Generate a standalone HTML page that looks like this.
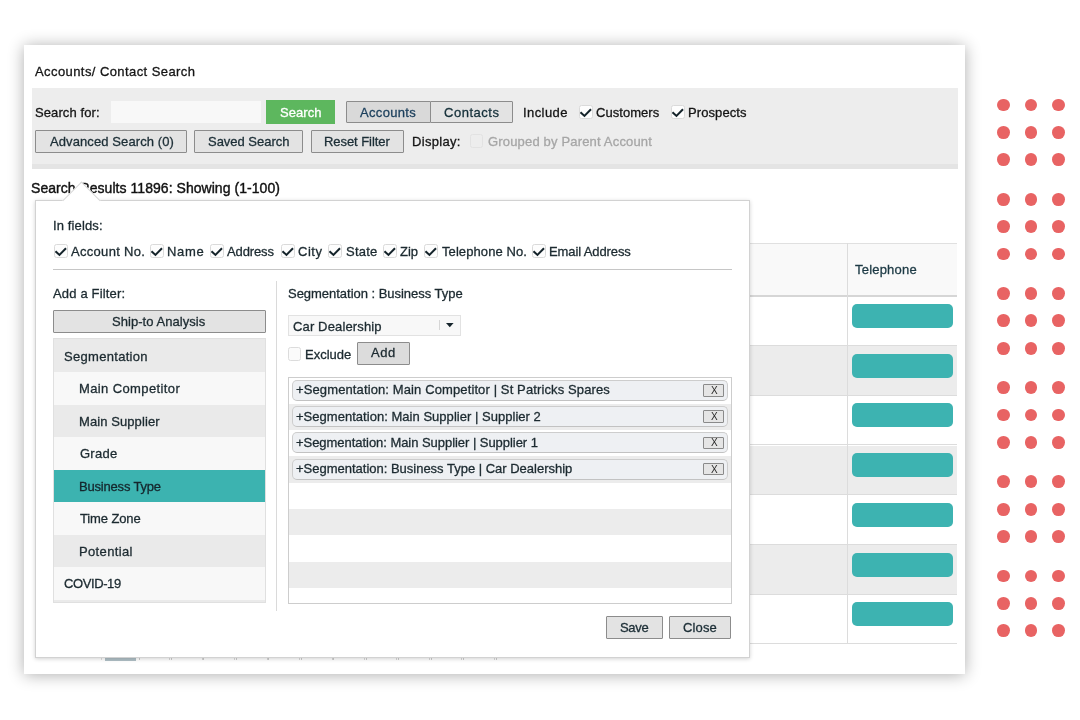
<!DOCTYPE html>
<html><head><meta charset="utf-8">
<style>
*{box-sizing:border-box;margin:0;padding:0}
html,body{width:1080px;height:720px;overflow:hidden;background:#fff;font-family:"Liberation Sans",sans-serif;font-size:13px}
.a{position:absolute}
.t{position:absolute;white-space:pre;will-change:transform}
.dot{position:absolute;width:12.8px;height:12.8px;border-radius:50%;background:#e86363}
</style></head><body>
<div class="a" style="left:24px;top:45px;width:941px;height:629px;background:#fff;box-shadow:0 1px 15px rgba(0,0,0,0.32)"></div>
<div class="t" style="left:35.30px;top:63.90px;font-size:13px;line-height:16px;color:#151515;-webkit-text-stroke:0.3px #151515;letter-spacing:0.419px;">Accounts/ Contact Search</div>
<div class="a" style="left:32px;top:88px;width:926px;height:81px;background:#ededed"></div>
<div class="a" style="left:32px;top:163.5px;width:926px;height:5.5px;background:#e4e4e4"></div>
<div class="t" style="left:35.40px;top:105.10px;font-size:13px;line-height:16px;color:#151515;-webkit-text-stroke:0.3px #151515;letter-spacing:0.103px;">Search for:</div>
<div class="a" style="left:111px;top:101px;width:150px;height:22px;background:#f8f8f8"></div>
<div class="a" style="left:266px;top:100px;width:69px;height:24px;background:#5db75e"></div>
<div class="t" style="left:280.00px;top:105.10px;font-size:13px;line-height:16px;color:#ffffff;-webkit-text-stroke:0.3px #ffffff;letter-spacing:0.058px;">Search</div>
<div class="a" style="left:346px;top:100.5px;width:84.5px;height:22.5px;background:#d9d9d9;border:1px solid #8c8c8c;border-radius:1px"></div>
<div class="a" style="left:429.5px;top:100.5px;width:83.5px;height:22.5px;background:#e3e3e3;border:1px solid #8c8c8c;border-radius:1px"></div>
<div class="t" style="left:360.00px;top:105.10px;font-size:13px;line-height:16px;color:#1b3f5c;-webkit-text-stroke:0.3px #1b3f5c;letter-spacing:0.325px;">Accounts</div>
<div class="t" style="left:443.75px;top:105.10px;font-size:13px;line-height:16px;color:#15303a;-webkit-text-stroke:0.3px #15303a;letter-spacing:0.528px;">Contacts</div>
<div class="t" style="left:523.25px;top:105.10px;font-size:13px;line-height:16px;color:#151515;-webkit-text-stroke:0.3px #151515;letter-spacing:0.427px;">Include</div>
<div class="a" style="left:579px;top:105px;width:13.5px;height:14px;border:1px solid #dadada;border-radius:2.5px;background:#fdfdfd"><svg class="a" style="left:0;top:0" width="13" height="13" viewBox="0 0 13 13"><polyline points="0.5,6.3 4.45,9.9 11,3.3" fill="none" stroke="#14232a" stroke-width="2" stroke-linecap="butt" stroke-linejoin="miter"/></svg></div>
<div class="t" style="left:596.25px;top:105.10px;font-size:13px;line-height:16px;color:#151515;-webkit-text-stroke:0.3px #151515;letter-spacing:0.050px;">Customers</div>
<div class="a" style="left:671px;top:105px;width:13.5px;height:14px;border:1px solid #dadada;border-radius:2.5px;background:#fdfdfd"><svg class="a" style="left:0;top:0" width="13" height="13" viewBox="0 0 13 13"><polyline points="0.5,6.3 4.45,9.9 11,3.3" fill="none" stroke="#14232a" stroke-width="2" stroke-linecap="butt" stroke-linejoin="miter"/></svg></div>
<div class="t" style="left:687.75px;top:105.10px;font-size:13px;line-height:16px;color:#151515;-webkit-text-stroke:0.3px #151515;letter-spacing:0.087px;">Prospects</div>
<div class="a" style="left:35.3px;top:130px;width:151.5px;height:23px;background:#e3e3e3;border:1px solid #8c8c8c;border-radius:1px"></div>
<div class="a" style="left:194.2px;top:130px;width:108.5px;height:23px;background:#e3e3e3;border:1px solid #8c8c8c;border-radius:1px"></div>
<div class="a" style="left:311.2px;top:130px;width:92.5px;height:23px;background:#e3e3e3;border:1px solid #8c8c8c;border-radius:1px"></div>
<div class="t" style="left:49.50px;top:134.00px;font-size:13px;line-height:16px;color:#1c2e36;-webkit-text-stroke:0.3px #1c2e36;letter-spacing:0.095px;">Advanced Search (0)</div>
<div class="t" style="left:208.00px;top:134.00px;font-size:13px;line-height:16px;color:#1c2e36;-webkit-text-stroke:0.3px #1c2e36;letter-spacing:-0.017px;">Saved Search</div>
<div class="t" style="left:324.00px;top:134.00px;font-size:13px;line-height:16px;color:#1c2e36;-webkit-text-stroke:0.3px #1c2e36;letter-spacing:-0.057px;">Reset Filter</div>
<div class="t" style="left:411.50px;top:134.00px;font-size:13px;line-height:16px;color:#151515;-webkit-text-stroke:0.3px #151515;letter-spacing:0.304px;">Display:</div>
<div class="a" style="left:470px;top:134px;width:13px;height:13.5px;border:1px solid #e2e2e2;border-radius:2.5px;background:#ededed"></div>
<div class="t" style="left:488.00px;top:134.00px;font-size:13px;line-height:16px;color:#a6a6a6;-webkit-text-stroke:0.3px #a6a6a6;letter-spacing:0.174px;">Grouped by Parent Account</div>
<div class="t" style="left:31.10px;top:178.55px;font-size:14px;line-height:18px;color:#111111;-webkit-text-stroke:0.3px #111111;letter-spacing:0.046px;-webkit-text-stroke:0.4px #111">Search Results 11896: Showing (1-100)</div>
<div class="a" style="left:36px;top:243px;width:921px;height:54px;background:#f9f9f9;border-top:1px solid #e0e0e0"></div>
<div class="a" style="left:36px;top:296.3px;width:921px;height:49.7px;background:#fff;border-bottom:1px solid #dcdcdc"></div>
<div class="a" style="left:852.3px;top:303.9px;width:100.7px;height:24px;background:#3db3b1;border-radius:5px"></div>
<div class="a" style="left:36px;top:346.0px;width:921px;height:49.7px;background:#ececec;border-bottom:1px solid #dcdcdc"></div>
<div class="a" style="left:852.3px;top:353.6px;width:100.7px;height:24px;background:#3db3b1;border-radius:5px"></div>
<div class="a" style="left:36px;top:395.8px;width:921px;height:49.7px;background:#fff;border-bottom:1px solid #dcdcdc"></div>
<div class="a" style="left:852.3px;top:403.4px;width:100.7px;height:24px;background:#3db3b1;border-radius:5px"></div>
<div class="a" style="left:36px;top:445.5px;width:921px;height:49.7px;background:#ececec;border-bottom:1px solid #dcdcdc"></div>
<div class="a" style="left:852.3px;top:453.1px;width:100.7px;height:24px;background:#3db3b1;border-radius:5px"></div>
<div class="a" style="left:36px;top:495.2px;width:921px;height:49.7px;background:#fff;border-bottom:1px solid #dcdcdc"></div>
<div class="a" style="left:852.3px;top:502.8px;width:100.7px;height:24px;background:#3db3b1;border-radius:5px"></div>
<div class="a" style="left:36px;top:545.0px;width:921px;height:49.7px;background:#ececec;border-bottom:1px solid #dcdcdc"></div>
<div class="a" style="left:852.3px;top:552.6px;width:100.7px;height:24px;background:#3db3b1;border-radius:5px"></div>
<div class="a" style="left:36px;top:594.7px;width:921px;height:49.7px;background:#fff;border-bottom:1px solid #dcdcdc"></div>
<div class="a" style="left:852.3px;top:602.3px;width:100.7px;height:24px;background:#3db3b1;border-radius:5px"></div>
<div class="a" style="left:36px;top:295px;width:921px;height:2px;background:#d6d6d6"></div>
<div class="a" style="left:847.3px;top:243px;width:1px;height:401px;background:#dcdcdc"></div>
<div class="t" style="left:855.30px;top:262.20px;font-size:13px;line-height:16px;color:#1d3a45;-webkit-text-stroke:0.3px #1d3a45;letter-spacing:0.204px;">Telephone</div>
<div class="a" style="left:105px;top:650px;width:31px;height:10.5px;background:#afbfc5"></div>
<div class="a" style="left:101px;top:650px;width:1px;height:10px;background:#dedede"></div>
<div class="a" style="left:138.5px;top:650px;width:1px;height:10px;background:#cdcdcd"></div>
<div class="a" style="left:170.9px;top:650px;width:1px;height:10px;background:#cdcdcd"></div>
<div class="a" style="left:169.2px;top:650px;width:1px;height:10px;background:#d8d8d8"></div>
<div class="a" style="left:203.4px;top:650px;width:1px;height:10px;background:#cdcdcd"></div>
<div class="a" style="left:201.7px;top:650px;width:1px;height:10px;background:#d8d8d8"></div>
<div class="a" style="left:235.9px;top:650px;width:1px;height:10px;background:#cdcdcd"></div>
<div class="a" style="left:234.2px;top:650px;width:1px;height:10px;background:#d8d8d8"></div>
<div class="a" style="left:268.3px;top:650px;width:1px;height:10px;background:#cdcdcd"></div>
<div class="a" style="left:266.6px;top:650px;width:1px;height:10px;background:#d8d8d8"></div>
<div class="a" style="left:300.8px;top:650px;width:1px;height:10px;background:#cdcdcd"></div>
<div class="a" style="left:299.1px;top:650px;width:1px;height:10px;background:#d8d8d8"></div>
<div class="a" style="left:333.2px;top:650px;width:1px;height:10px;background:#cdcdcd"></div>
<div class="a" style="left:331.5px;top:650px;width:1px;height:10px;background:#d8d8d8"></div>
<div class="a" style="left:365.7px;top:650px;width:1px;height:10px;background:#cdcdcd"></div>
<div class="a" style="left:364.0px;top:650px;width:1px;height:10px;background:#d8d8d8"></div>
<div class="a" style="left:398.1px;top:650px;width:1px;height:10px;background:#cdcdcd"></div>
<div class="a" style="left:396.4px;top:650px;width:1px;height:10px;background:#d8d8d8"></div>
<div class="a" style="left:430.6px;top:650px;width:1px;height:10px;background:#cdcdcd"></div>
<div class="a" style="left:428.9px;top:650px;width:1px;height:10px;background:#d8d8d8"></div>
<div class="a" style="left:463.0px;top:650px;width:1px;height:10px;background:#cdcdcd"></div>
<div class="a" style="left:461.3px;top:650px;width:1px;height:10px;background:#d8d8d8"></div>
<div class="a" style="left:495.5px;top:650px;width:1px;height:10px;background:#cdcdcd"></div>
<div class="a" style="left:493.8px;top:650px;width:1px;height:10px;background:#d8d8d8"></div>
<div class="a" style="left:35px;top:200px;width:715px;height:457.5px;background:#fff;border:1px solid #d2d2d2;box-shadow:0 1px 4px rgba(0,0,0,0.18)"></div>
<div class="a" style="left:68.3px;top:186.6px;width:26.9px;height:26.9px;background:#fff;border-left:1px solid #d8d8d8;border-top:1px solid #d8d8d8;transform:rotate(45deg)"></div>
<div class="t" style="left:52.90px;top:217.90px;font-size:13px;line-height:16px;color:#1c2a30;-webkit-text-stroke:0.3px #1c2a30;letter-spacing:0.133px;">In fields:</div>
<div class="a" style="left:54px;top:244px;width:13.5px;height:14.2px;border:1px solid #dadada;border-radius:2.5px;background:#fdfdfd"><svg class="a" style="left:0;top:0" width="13" height="13" viewBox="0 0 13 13"><polyline points="0.5,6.3 4.45,9.9 11,3.3" fill="none" stroke="#14232a" stroke-width="2" stroke-linecap="butt" stroke-linejoin="miter"/></svg></div>
<div class="t" style="left:71.25px;top:244.20px;font-size:13px;line-height:16px;color:#1c2a30;-webkit-text-stroke:0.3px #1c2a30;letter-spacing:0.305px;">Account No.</div>
<div class="a" style="left:150px;top:244px;width:13.5px;height:14.2px;border:1px solid #dadada;border-radius:2.5px;background:#fdfdfd"><svg class="a" style="left:0;top:0" width="13" height="13" viewBox="0 0 13 13"><polyline points="0.5,6.3 4.45,9.9 11,3.3" fill="none" stroke="#14232a" stroke-width="2" stroke-linecap="butt" stroke-linejoin="miter"/></svg></div>
<div class="t" style="left:167.25px;top:244.20px;font-size:13px;line-height:16px;color:#1c2a30;-webkit-text-stroke:0.3px #1c2a30;letter-spacing:0.684px;">Name</div>
<div class="a" style="left:210px;top:244px;width:13.5px;height:14.2px;border:1px solid #dadada;border-radius:2.5px;background:#fdfdfd"><svg class="a" style="left:0;top:0" width="13" height="13" viewBox="0 0 13 13"><polyline points="0.5,6.3 4.45,9.9 11,3.3" fill="none" stroke="#14232a" stroke-width="2" stroke-linecap="butt" stroke-linejoin="miter"/></svg></div>
<div class="t" style="left:227.00px;top:244.20px;font-size:13px;line-height:16px;color:#1c2a30;-webkit-text-stroke:0.3px #1c2a30;letter-spacing:-0.115px;">Address</div>
<div class="a" style="left:281px;top:244px;width:13.5px;height:14.2px;border:1px solid #dadada;border-radius:2.5px;background:#fdfdfd"><svg class="a" style="left:0;top:0" width="13" height="13" viewBox="0 0 13 13"><polyline points="0.5,6.3 4.45,9.9 11,3.3" fill="none" stroke="#14232a" stroke-width="2" stroke-linecap="butt" stroke-linejoin="miter"/></svg></div>
<div class="t" style="left:298.40px;top:244.20px;font-size:13px;line-height:16px;color:#1c2a30;-webkit-text-stroke:0.3px #1c2a30;letter-spacing:0.537px;">City</div>
<div class="a" style="left:328px;top:244px;width:13.5px;height:14.2px;border:1px solid #dadada;border-radius:2.5px;background:#fdfdfd"><svg class="a" style="left:0;top:0" width="13" height="13" viewBox="0 0 13 13"><polyline points="0.5,6.3 4.45,9.9 11,3.3" fill="none" stroke="#14232a" stroke-width="2" stroke-linecap="butt" stroke-linejoin="miter"/></svg></div>
<div class="t" style="left:345.60px;top:244.20px;font-size:13px;line-height:16px;color:#1c2a30;-webkit-text-stroke:0.3px #1c2a30;letter-spacing:0.244px;">State</div>
<div class="a" style="left:383px;top:244px;width:13.5px;height:14.2px;border:1px solid #dadada;border-radius:2.5px;background:#fdfdfd"><svg class="a" style="left:0;top:0" width="13" height="13" viewBox="0 0 13 13"><polyline points="0.5,6.3 4.45,9.9 11,3.3" fill="none" stroke="#14232a" stroke-width="2" stroke-linecap="butt" stroke-linejoin="miter"/></svg></div>
<div class="t" style="left:400.00px;top:244.20px;font-size:13px;line-height:16px;color:#1c2a30;-webkit-text-stroke:0.3px #1c2a30;letter-spacing:-0.015px;">Zip</div>
<div class="a" style="left:424px;top:244px;width:13.5px;height:14.2px;border:1px solid #dadada;border-radius:2.5px;background:#fdfdfd"><svg class="a" style="left:0;top:0" width="13" height="13" viewBox="0 0 13 13"><polyline points="0.5,6.3 4.45,9.9 11,3.3" fill="none" stroke="#14232a" stroke-width="2" stroke-linecap="butt" stroke-linejoin="miter"/></svg></div>
<div class="t" style="left:442.00px;top:244.20px;font-size:13px;line-height:16px;color:#1c2a30;-webkit-text-stroke:0.3px #1c2a30;letter-spacing:0.085px;">Telephone No.</div>
<div class="a" style="left:532px;top:244px;width:13.5px;height:14.2px;border:1px solid #dadada;border-radius:2.5px;background:#fdfdfd"><svg class="a" style="left:0;top:0" width="13" height="13" viewBox="0 0 13 13"><polyline points="0.5,6.3 4.45,9.9 11,3.3" fill="none" stroke="#14232a" stroke-width="2" stroke-linecap="butt" stroke-linejoin="miter"/></svg></div>
<div class="t" style="left:549.00px;top:244.20px;font-size:13px;line-height:16px;color:#1c2a30;-webkit-text-stroke:0.3px #1c2a30;letter-spacing:-0.109px;">Email Address</div>
<div class="a" style="left:53px;top:269px;width:679px;height:1px;background:#c6c6c6"></div>
<div class="t" style="left:53.30px;top:286.20px;font-size:13px;line-height:16px;color:#1c2a30;-webkit-text-stroke:0.3px #1c2a30;letter-spacing:0.169px;">Add a Filter:</div>
<div class="a" style="left:53.3px;top:310.2px;width:212.5px;height:22.5px;background:#e3e3e3;border:1px solid #8c8c8c;border-radius:1px"></div>
<div class="t" style="left:112.10px;top:314.35px;font-size:13px;line-height:16px;color:#1c2a30;-webkit-text-stroke:0.3px #1c2a30;letter-spacing:0.046px;">Ship-to Analysis</div>
<div class="a" style="left:53.3px;top:338.3px;width:212.5px;height:265.2px;background:#eaeaea;border:1px solid #e0e0e0"></div>
<div class="a" style="left:54.3px;top:339.5px;width:210.5px;height:32.5px;background:#eaeaea"></div>
<div class="t" style="left:63.75px;top:348.80px;font-size:13px;line-height:16px;color:#1c2a30;-webkit-text-stroke:0.3px #1c2a30;letter-spacing:0.301px;">Segmentation</div>
<div class="a" style="left:54.3px;top:372.0px;width:210.5px;height:32.5px;background:#f8f8f8"></div>
<div class="t" style="left:79.40px;top:381.30px;font-size:13px;line-height:16px;color:#1c2a30;-webkit-text-stroke:0.3px #1c2a30;letter-spacing:0.383px;">Main Competitor</div>
<div class="a" style="left:54.3px;top:404.5px;width:210.5px;height:32.5px;background:#eaeaea"></div>
<div class="t" style="left:79.00px;top:413.80px;font-size:13px;line-height:16px;color:#1c2a30;-webkit-text-stroke:0.3px #1c2a30;letter-spacing:0.087px;">Main Supplier</div>
<div class="a" style="left:54.3px;top:437.0px;width:210.5px;height:32.5px;background:#f8f8f8"></div>
<div class="t" style="left:80.00px;top:446.30px;font-size:13px;line-height:16px;color:#1c2a30;-webkit-text-stroke:0.3px #1c2a30;letter-spacing:0.250px;">Grade</div>
<div class="a" style="left:54.3px;top:469.5px;width:210.5px;height:32.5px;background:#3cb3b0"></div>
<div class="t" style="left:79.00px;top:478.80px;font-size:13px;line-height:16px;color:#15272d;-webkit-text-stroke:0.3px #15272d;letter-spacing:-0.193px;">Business Type</div>
<div class="a" style="left:54.3px;top:502.0px;width:210.5px;height:32.5px;background:#f8f8f8"></div>
<div class="t" style="left:80.00px;top:511.30px;font-size:13px;line-height:16px;color:#1c2a30;-webkit-text-stroke:0.3px #1c2a30;letter-spacing:-0.127px;">Time Zone</div>
<div class="a" style="left:54.3px;top:534.5px;width:210.5px;height:32.5px;background:#eaeaea"></div>
<div class="t" style="left:79.00px;top:543.80px;font-size:13px;line-height:16px;color:#1c2a30;-webkit-text-stroke:0.3px #1c2a30;letter-spacing:0.350px;">Potential</div>
<div class="a" style="left:54.3px;top:567.0px;width:210.5px;height:32.5px;background:#f8f8f8"></div>
<div class="t" style="left:63.75px;top:576.30px;font-size:13px;line-height:16px;color:#1c2a30;-webkit-text-stroke:0.3px #1c2a30;letter-spacing:-0.404px;">COVID-19</div>
<div class="a" style="left:276px;top:280.5px;width:1px;height:330px;background:#dadada"></div>
<div class="t" style="left:288.30px;top:286.10px;font-size:13px;line-height:16px;color:#1c2a30;-webkit-text-stroke:0.3px #1c2a30;letter-spacing:-0.025px;">Segmentation : Business Type</div>
<div class="a" style="left:288px;top:315.2px;width:172.6px;height:21px;background:#f8f8f8;border:1px solid #e2e2e2"></div>
<div class="t" style="left:292.60px;top:318.50px;font-size:13px;line-height:16px;color:#1c2a30;-webkit-text-stroke:0.3px #1c2a30;letter-spacing:0.141px;">Car Dealership</div>
<div class="a" style="left:439px;top:320.4px;width:1px;height:9.2px;background:#d6d6d6"></div>
<svg class="a" style="left:445.6px;top:323px" width="8" height="5" viewBox="0 0 8 5"><polygon points="0,0 7.6,0 3.8,4.3" fill="#16252c"/></svg>
<div class="a" style="left:288px;top:347px;width:13.4px;height:13.9px;border:1px solid #dcdcdc;border-radius:2.5px;background:#fbfbfb"></div>
<div class="t" style="left:304.90px;top:346.80px;font-size:13px;line-height:16px;color:#1c2a30;-webkit-text-stroke:0.3px #1c2a30;letter-spacing:-0.003px;">Exclude</div>
<div class="a" style="left:357.4px;top:341.7px;width:52.2px;height:22.9px;background:#dcdcdc;border:1px solid #8c8c8c;border-radius:1px"></div>
<div class="t" style="left:371.10px;top:345.00px;font-size:13px;line-height:16px;color:#1c2a30;-webkit-text-stroke:0.3px #1c2a30;letter-spacing:0.550px;">Add</div>
<div class="a" style="left:288.3px;top:376.5px;width:443.4px;height:227px;background:#fff;border:1px solid #cdcdcd;overflow:hidden"><div class="a" style="left:0;top:26.3px;width:100%;height:26.3px;background:#ececec"></div><div class="a" style="left:0;top:78.9px;width:100%;height:26.3px;background:#ececec"></div><div class="a" style="left:0;top:131.5px;width:100%;height:26.3px;background:#ececec"></div><div class="a" style="left:0;top:184.1px;width:100%;height:26.3px;background:#ececec"></div></div>
<div class="a" style="left:291.5px;top:380px;width:436.8px;height:21px;background:#eef0f3;border:1px solid #cdcdcd;border-bottom-color:#c2c2c2;border-radius:5px"></div>
<div class="t" style="left:295.70px;top:382.40px;font-size:13px;line-height:16px;color:#1c2a30;-webkit-text-stroke:0.3px #1c2a30;letter-spacing:0.117px;">+Segmentation: Main Competitor | St Patricks Spares</div>
<div class="a" style="left:703px;top:384.2px;width:20.8px;height:12.5px;background:#e5e5e5;border:1px solid #8a8a8a;border-radius:1px"></div>
<div class="t" style="left:710.50px;top:384.94px;font-size:10px;line-height:12px;color:#2a2a2a;-webkit-text-stroke:0.3px #2a2a2a;letter-spacing:0.000px;-webkit-text-stroke:0">X</div>
<div class="a" style="left:291.5px;top:406.1px;width:436.8px;height:21px;background:#eef0f3;border:1px solid #cdcdcd;border-bottom-color:#c2c2c2;border-radius:5px"></div>
<div class="t" style="left:295.70px;top:408.50px;font-size:13px;line-height:16px;color:#1c2a30;-webkit-text-stroke:0.3px #1c2a30;letter-spacing:0.029px;">+Segmentation: Main Supplier | Supplier 2</div>
<div class="a" style="left:703px;top:410.3px;width:20.8px;height:12.5px;background:#e5e5e5;border:1px solid #8a8a8a;border-radius:1px"></div>
<div class="t" style="left:710.50px;top:411.04px;font-size:10px;line-height:12px;color:#2a2a2a;-webkit-text-stroke:0.3px #2a2a2a;letter-spacing:0.000px;-webkit-text-stroke:0">X</div>
<div class="a" style="left:291.5px;top:432.4px;width:436.8px;height:21px;background:#eef0f3;border:1px solid #cdcdcd;border-bottom-color:#c2c2c2;border-radius:5px"></div>
<div class="t" style="left:295.70px;top:434.80px;font-size:13px;line-height:16px;color:#1c2a30;-webkit-text-stroke:0.3px #1c2a30;letter-spacing:-0.043px;">+Segmentation: Main Supplier | Supplier 1</div>
<div class="a" style="left:703px;top:436.59999999999997px;width:20.8px;height:12.5px;background:#e5e5e5;border:1px solid #8a8a8a;border-radius:1px"></div>
<div class="t" style="left:710.50px;top:437.34px;font-size:10px;line-height:12px;color:#2a2a2a;-webkit-text-stroke:0.3px #2a2a2a;letter-spacing:0.000px;-webkit-text-stroke:0">X</div>
<div class="a" style="left:291.5px;top:458.7px;width:436.8px;height:21px;background:#eef0f3;border:1px solid #cdcdcd;border-bottom-color:#c2c2c2;border-radius:5px"></div>
<div class="t" style="left:295.70px;top:461.10px;font-size:13px;line-height:16px;color:#1c2a30;-webkit-text-stroke:0.3px #1c2a30;letter-spacing:-0.008px;">+Segmentation: Business Type | Car Dealership</div>
<div class="a" style="left:703px;top:462.9px;width:20.8px;height:12.5px;background:#e5e5e5;border:1px solid #8a8a8a;border-radius:1px"></div>
<div class="t" style="left:710.50px;top:463.64px;font-size:10px;line-height:12px;color:#2a2a2a;-webkit-text-stroke:0.3px #2a2a2a;letter-spacing:0.000px;-webkit-text-stroke:0">X</div>
<div class="a" style="left:606.1px;top:616.4px;width:56.5px;height:23px;background:#e3e3e3;border:1px solid #8c8c8c;border-radius:1px"></div>
<div class="t" style="left:620.00px;top:620.20px;font-size:13px;line-height:16px;color:#1c2e36;-webkit-text-stroke:0.3px #1c2e36;letter-spacing:-0.300px;">Save</div>
<div class="a" style="left:669px;top:616.4px;width:61.7px;height:23px;background:#e3e3e3;border:1px solid #8c8c8c;border-radius:1px"></div>
<div class="t" style="left:683.20px;top:620.20px;font-size:13px;line-height:16px;color:#1c2e36;-webkit-text-stroke:0.3px #1c2e36;letter-spacing:0.148px;">Close</div>
<div class="dot" style="left:997.3px;top:98.6px"></div>
<div class="dot" style="left:1024.7px;top:98.6px"></div>
<div class="dot" style="left:1052.2px;top:98.6px"></div>
<div class="dot" style="left:997.3px;top:126.0px"></div>
<div class="dot" style="left:1024.7px;top:126.0px"></div>
<div class="dot" style="left:1052.2px;top:126.0px"></div>
<div class="dot" style="left:997.3px;top:153.4px"></div>
<div class="dot" style="left:1024.7px;top:153.4px"></div>
<div class="dot" style="left:1052.2px;top:153.4px"></div>
<div class="dot" style="left:997.3px;top:192.8px"></div>
<div class="dot" style="left:1024.7px;top:192.8px"></div>
<div class="dot" style="left:1052.2px;top:192.8px"></div>
<div class="dot" style="left:997.3px;top:220.2px"></div>
<div class="dot" style="left:1024.7px;top:220.2px"></div>
<div class="dot" style="left:1052.2px;top:220.2px"></div>
<div class="dot" style="left:997.3px;top:247.6px"></div>
<div class="dot" style="left:1024.7px;top:247.6px"></div>
<div class="dot" style="left:1052.2px;top:247.6px"></div>
<div class="dot" style="left:997.3px;top:287.0px"></div>
<div class="dot" style="left:1024.7px;top:287.0px"></div>
<div class="dot" style="left:1052.2px;top:287.0px"></div>
<div class="dot" style="left:997.3px;top:314.4px"></div>
<div class="dot" style="left:1024.7px;top:314.4px"></div>
<div class="dot" style="left:1052.2px;top:314.4px"></div>
<div class="dot" style="left:997.3px;top:341.8px"></div>
<div class="dot" style="left:1024.7px;top:341.8px"></div>
<div class="dot" style="left:1052.2px;top:341.8px"></div>
<div class="dot" style="left:997.3px;top:381.2px"></div>
<div class="dot" style="left:1024.7px;top:381.2px"></div>
<div class="dot" style="left:1052.2px;top:381.2px"></div>
<div class="dot" style="left:997.3px;top:408.6px"></div>
<div class="dot" style="left:1024.7px;top:408.6px"></div>
<div class="dot" style="left:1052.2px;top:408.6px"></div>
<div class="dot" style="left:997.3px;top:436.0px"></div>
<div class="dot" style="left:1024.7px;top:436.0px"></div>
<div class="dot" style="left:1052.2px;top:436.0px"></div>
<div class="dot" style="left:997.3px;top:475.4px"></div>
<div class="dot" style="left:1024.7px;top:475.4px"></div>
<div class="dot" style="left:1052.2px;top:475.4px"></div>
<div class="dot" style="left:997.3px;top:502.8px"></div>
<div class="dot" style="left:1024.7px;top:502.8px"></div>
<div class="dot" style="left:1052.2px;top:502.8px"></div>
<div class="dot" style="left:997.3px;top:530.2px"></div>
<div class="dot" style="left:1024.7px;top:530.2px"></div>
<div class="dot" style="left:1052.2px;top:530.2px"></div>
<div class="dot" style="left:997.3px;top:569.6px"></div>
<div class="dot" style="left:1024.7px;top:569.6px"></div>
<div class="dot" style="left:1052.2px;top:569.6px"></div>
<div class="dot" style="left:997.3px;top:597.0px"></div>
<div class="dot" style="left:1024.7px;top:597.0px"></div>
<div class="dot" style="left:1052.2px;top:597.0px"></div>
<div class="dot" style="left:997.3px;top:624.4px"></div>
<div class="dot" style="left:1024.7px;top:624.4px"></div>
<div class="dot" style="left:1052.2px;top:624.4px"></div>
</body></html>
